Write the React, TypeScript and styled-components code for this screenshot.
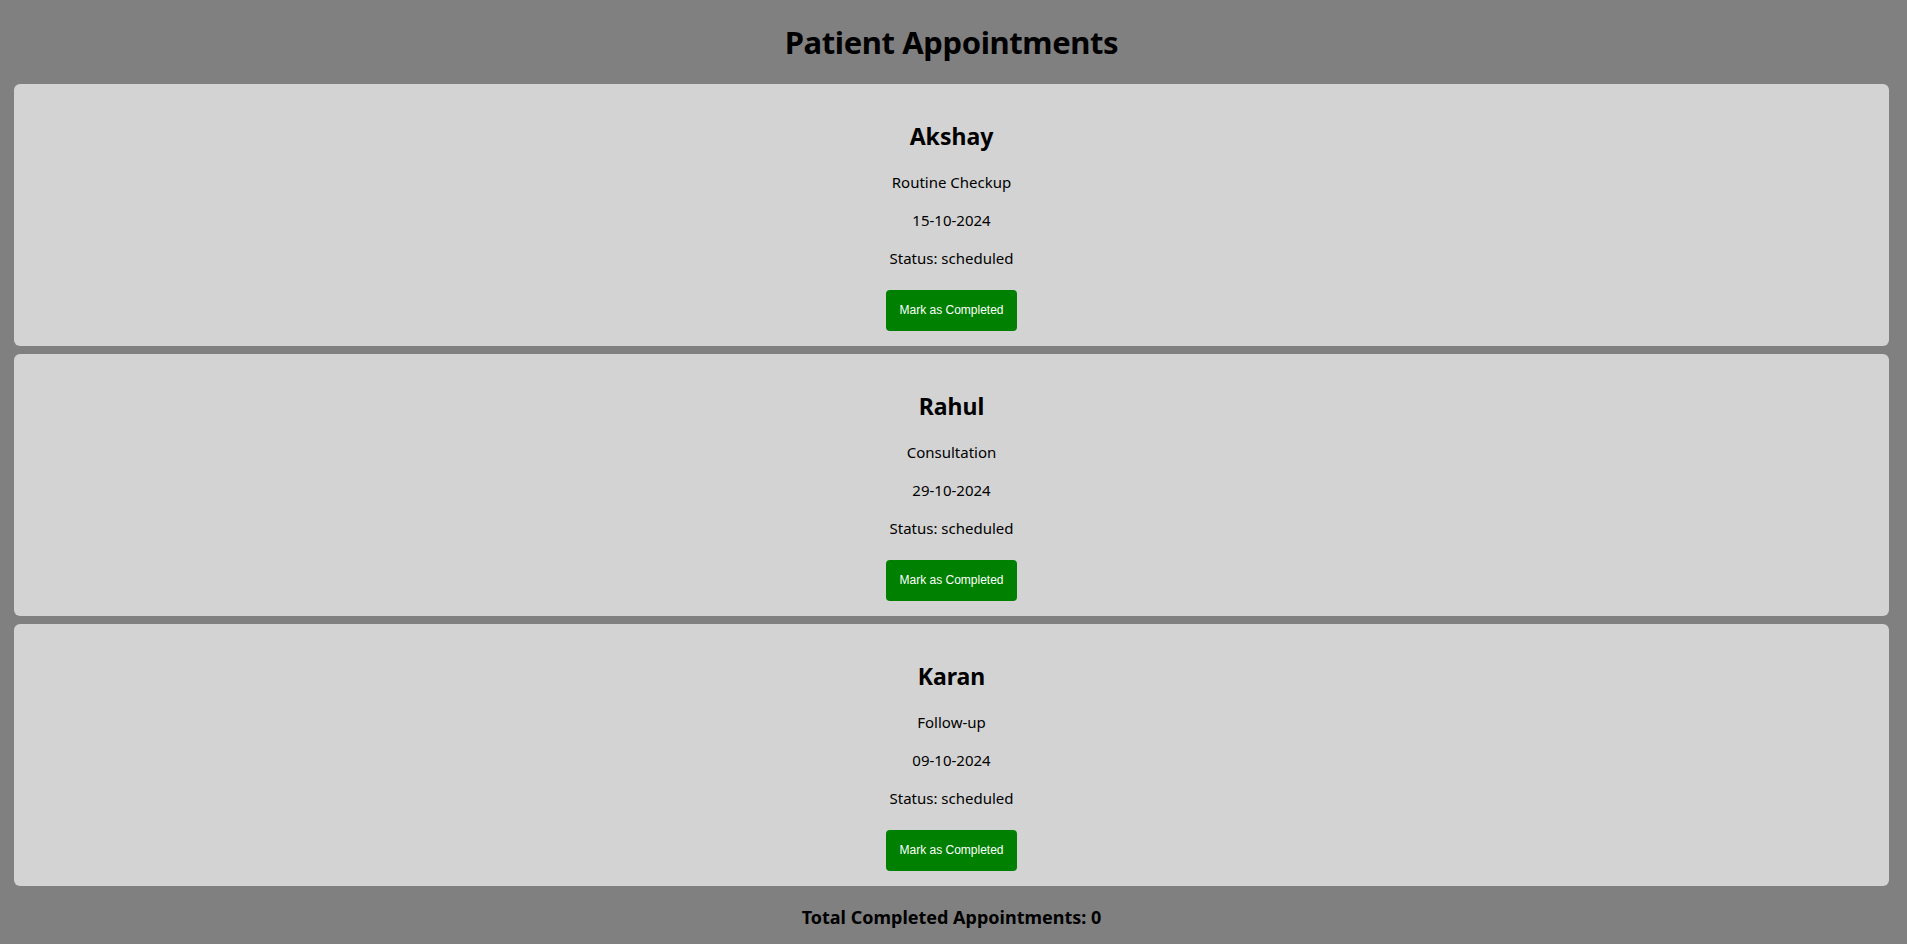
import React, { useState } from "react";
import styled, { createGlobalStyle } from "styled-components";

const GlobalStyle = createGlobalStyle`
  html, body {
    margin: 0;
    padding: 0;
    background: #808080;
  }
  body {
    font-family: "Noto Sans", "Open Sans", sans-serif;
    color: #000;
  }
  ::-webkit-scrollbar {
    width: 4px;
  }
  ::-webkit-scrollbar-track {
    background: #f1f1f1;
  }
  ::-webkit-scrollbar-thumb {
    background: #c1c1c1;
    border-left: 1.5px solid #f1f1f1;
  }
  ::-webkit-scrollbar-button:single-button {
    display: block;
    height: 32px;
    background: #f1f1f1;
  }
`;

const Page = styled.div`
  padding: 21px 18px 31px 14px;
  display: flex;
  flex-direction: column;
  align-items: stretch;
`;

const Title = styled.h1`
  margin: 0 0 21px;
  font-size: 31px;
  line-height: 42px;
  font-weight: 700;
  text-align: center;
  letter-spacing: -0.4px;
`;

const List = styled.div`
  display: flex;
  flex-direction: column;
  gap: 8px;
`;

const Card = styled.div`
  background: #d3d3d3;
  border-radius: 6px;
  padding: 15px;
  height: 262px;
  box-sizing: border-box;
  display: flex;
  flex-direction: column;
  align-items: center;
`;

const Name = styled.h2`
  margin: 21px 0 19px;
  font-size: 23px;
  line-height: 32px;
  font-weight: 700;
`;

const Line = styled.p`
  margin: 0 0 16px;
  font-size: 15px;
  line-height: 22px;
  &:last-of-type {
    margin-bottom: 21px;
  }
`;

const CompleteButton = styled.button<{ $done?: boolean }>`
  font-family: "Liberation Sans", Arial, sans-serif;
  font-size: 12px;
  line-height: 15px;
  padding: 13px 13.5px;
  border: none;
  border-radius: 4px;
  background: ${(p) => (p.$done ? "#6c6c6c" : "#008000")};
  color: #fff;
  cursor: pointer;
`;

const Total = styled.h3`
  margin: 19px 0 0;
  font-size: 18px;
  line-height: 25px;
  font-weight: 700;
  text-align: center;
`;

type Appt = { name: string; reason: string; date: string; status: string };

const initial: Appt[] = [
  { name: "Akshay", reason: "Routine Checkup", date: "15-10-2024", status: "scheduled" },
  { name: "Rahul", reason: "Consultation", date: "29-10-2024", status: "scheduled" },
  { name: "Karan", reason: "Follow-up", date: "09-10-2024", status: "scheduled" },
];

export default function App() {
  const [appts, setAppts] = useState<Appt[]>(initial);
  const done = appts.filter((a) => a.status === "completed").length;

  return (
    <>
      <GlobalStyle />
      <Page>
        <Title>Patient Appointments</Title>
        <List>
          {appts.map((a, i) => (
            <Card key={a.name}>
              <Name>{a.name}</Name>
              <Line>{a.reason}</Line>
              <Line>{a.date}</Line>
              <Line>Status: {a.status}</Line>
              <CompleteButton
                $done={a.status === "completed"}
                onClick={() =>
                  setAppts((prev) =>
                    prev.map((x, j) => (j === i ? { ...x, status: "completed" } : x))
                  )
                }
              >
                Mark as Completed
              </CompleteButton>
            </Card>
          ))}
        </List>
        <Total>Total Completed Appointments: {done}</Total>
      </Page>
    </>
  );
}
